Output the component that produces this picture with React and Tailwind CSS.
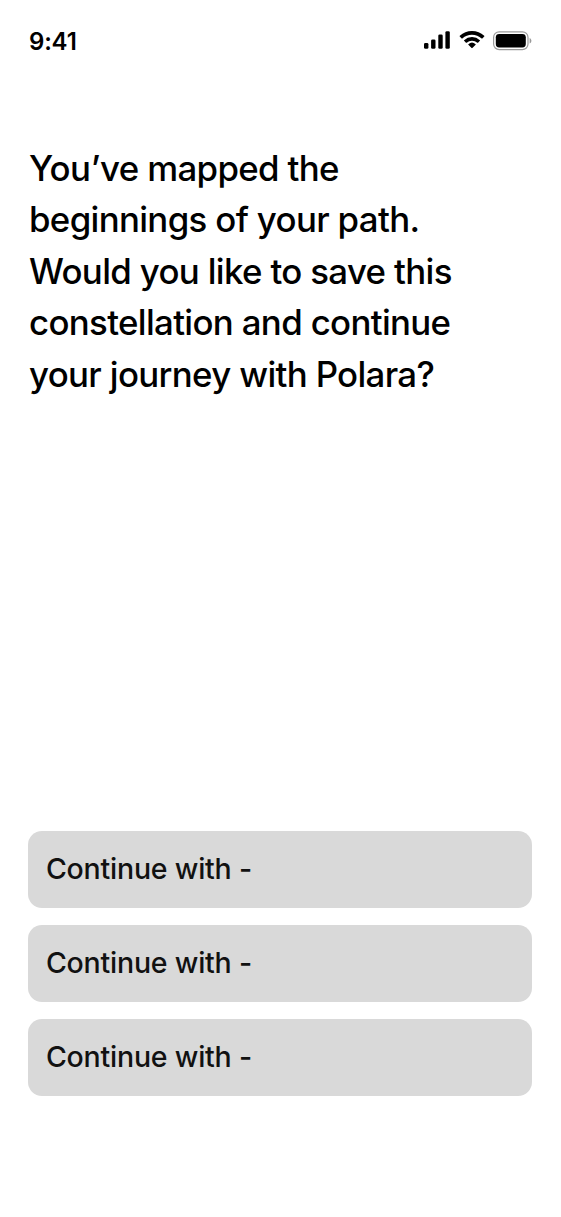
import { useState } from 'react';

const PROVIDERS = [
  { id: 'first', label: 'Continue with -' },
  { id: 'second', label: 'Continue with -' },
  { id: 'third', label: 'Continue with -' }
];

function SignalIcon() {
  return (
    <svg width="27" height="18" viewBox="0 0 27 18" fill="currentColor">
      <rect x="0" y="11.9" width="4.4" height="5.9" rx="1.4" />
      <rect x="7.1" y="8.4" width="4.4" height="9.4" rx="1.4" />
      <rect x="14.3" y="3.4" width="4.4" height="14.4" rx="1.4" />
      <rect x="21.4" y="0.2" width="4.4" height="17.6" rx="1.4" />
    </svg>
  );
}

function WifiIcon() {
  return (
    <svg width="26" height="18" viewBox="0 0 17 12" preserveAspectRatio="none" fill="currentColor">
      <path d="M8.5 2.42c2.35 0 4.6.9 6.3 2.52.13.12.34.12.46 0l1.22-1.24a.33.33 0 0 0 0-.48 11.52 11.52 0 0 0-15.96 0 .33.33 0 0 0 0 .48l1.22 1.24c.13.12.33.12.46 0A9.1 9.1 0 0 1 8.5 2.42Zm0 4.05c1.28 0 2.52.48 3.47 1.34.13.12.34.12.46 0l1.22-1.24a.34.34 0 0 0 0-.48 7.5 7.5 0 0 0-10.3 0 .34.34 0 0 0 0 .48l1.22 1.24c.13.12.33.12.46 0A5.14 5.14 0 0 1 8.5 6.47Zm2.38 2.76c.13-.13.13-.35-.01-.48a3.65 3.65 0 0 0-4.74 0 .34.34 0 0 0-.01.48l2.14 2.16c.13.13.34.13.47 0l2.15-2.16Z" />
    </svg>
  );
}

function BatteryIcon() {
  return (
    <svg width="39" height="20" viewBox="0 0 39 20" fill="none">
      <rect x="0.6" y="0.8" width="34.4" height="17.8" rx="5.6" stroke="#000" strokeOpacity="0.4" strokeWidth="1.2" />
      <rect x="2.8" y="2.9" width="30" height="13.6" rx="3.4" fill="#000" />
      <path d="M36.6 7v5.6c1.2-.5 1.8-1.6 1.8-2.8s-.6-2.3-1.8-2.8Z" fill="#000" fillOpacity="0.4" />
    </svg>
  );
}

export default function App() {
  const [selected, setSelected] = useState(null);

  return (
    <div className="flex h-[1217px] w-[561px] flex-col bg-white px-7 font-['Inter',sans-serif] text-black">
      {/* Status bar */}
      <div className="mt-[30px] flex h-6 items-center justify-between pr-px">
        <span className="ml-px text-[24px] leading-6 font-semibold tracking-[-0.2px]">9:41</span>
        <div className="flex items-start gap-2 pb-0.5">
          <SignalIcon />
          <WifiIcon />
          <BatteryIcon />
        </div>
      </div>

      {/* Prompt */}
      <h1 className="mt-[89px] ml-px text-[34.8px] leading-[51.4px] font-medium tracking-[-0.65px] whitespace-nowrap">
        You’ve mapped the<br />
        beginnings of your path.<br />
        Would you like to save this<br />
        constellation and continue<br />
        your journey with Polara?
      </h1>

      {/* Sign-in options */}
      <div className="mt-auto mb-[121px] ml-[0.45px] flex flex-col gap-[17px]">
        {PROVIDERS.map((provider) => (
          <button
            key={provider.id}
            type="button"
            aria-pressed={selected === provider.id}
            onClick={() => setSelected(provider.id)}
            className="h-[77px] w-[504px] rounded-[14px] bg-[#d9d9d9] px-[17.5px] text-left text-[28.5px] font-medium tracking-[-0.22px] text-[#111]"
          >
            {provider.label}
          </button>
        ))}
      </div>
    </div>
  );
}
